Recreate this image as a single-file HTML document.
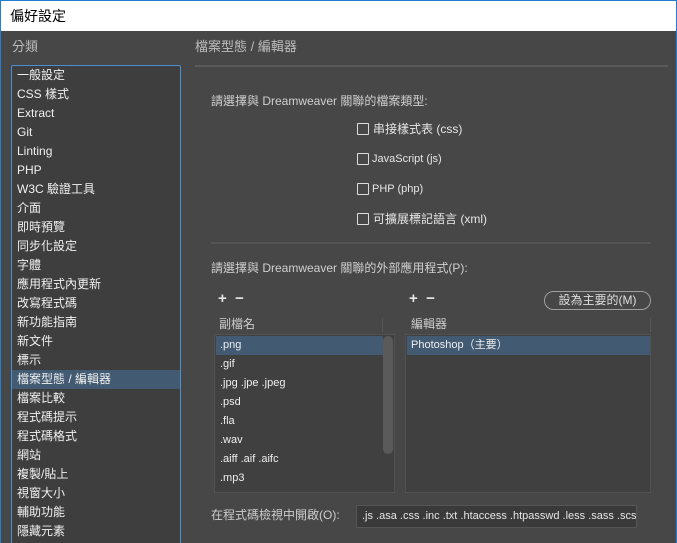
<!DOCTYPE html>
<html><head><meta charset="utf-8"><style>
*{margin:0;padding:0;box-sizing:border-box}
html,body{width:677px;height:543px;overflow:hidden}
body{background:#474747;font-family:"Liberation Sans","Noto Sans CJK TC",sans-serif;font-size:12px;color:#e6e6e6;position:relative}
.a{position:absolute;white-space:nowrap;line-height:16px}
#title{left:0;top:0;width:677px;height:31px;background:#fff;color:#000;font-size:14px;border-left:1px solid #1e7fd6;border-right:1px solid #1e7fd6;border-top:1px solid #1e7fd6}
#title span{position:absolute;left:9px;top:6px;line-height:18px}
#bl{left:0;top:31px;width:1px;height:512px;background:#1e7fd6}
#br{left:676px;top:31px;width:1px;height:512px;background:#1e7fd6}
.lbl{color:#bdbdbd;font-size:13px}
#list{left:11px;top:65px;width:170px;height:478px;background:#3e3e3e;border:1px solid #4a8fd0;border-bottom:none;border-radius:2px 2px 0 0;overflow:hidden}
#list div{height:19px;line-height:19px;padding-left:5px;font-size:12px;color:#f0f0f0}
#list .sel{background:#425a72}
.cb{width:12px;height:12px;border:1px solid #ddd;border-radius:1px}
.box{background:#404040;border:1px solid #525252}
.row{position:absolute;left:1px;height:19px;line-height:18px;padding-left:4px;font-size:11px;color:#eee}
</style></head><body>
<div id="title" class="a"><span>偏好設定</span></div>
<div id="bl" class="a"></div><div id="br" class="a"></div>
<div class="a lbl" style="left:12px;top:39px">分類</div>
<div class="a lbl" style="left:195px;top:39px">檔案型態 / 編輯器</div>
<div class="a" style="left:195px;top:65px;width:473px;height:2px;background:#5a5a5a"></div>
<div id="list" class="a">
<div>一般設定</div><div>CSS 樣式</div><div>Extract</div><div>Git</div><div>Linting</div><div>PHP</div><div>W3C 驗證工具</div><div>介面</div><div>即時預覽</div><div>同步化設定</div><div>字體</div><div>應用程式內更新</div><div>改寫程式碼</div><div>新功能指南</div><div>新文件</div><div>標示</div><div class="sel">檔案型態 / 編輯器</div><div>檔案比較</div><div>程式碼提示</div><div>程式碼格式</div><div>網站</div><div>複製/貼上</div><div>視窗大小</div><div>輔助功能</div><div>隱藏元素</div>
</div>
<div class="a" style="left:211px;top:93px;color:#cfcfcf">請選擇與 Dreamweaver 關聯的檔案類型:</div>
<div class="a cb" style="left:357px;top:123px"></div><div class="a" style="left:373px;top:121px">串接樣式表 (css)</div>
<div class="a cb" style="left:357px;top:153px"></div><div class="a" style="left:372px;top:151px;font-size:11px">JavaScript (js)</div>
<div class="a cb" style="left:357px;top:183px"></div><div class="a" style="left:372px;top:181px;font-size:11px">PHP (php)</div>
<div class="a cb" style="left:357px;top:213px"></div><div class="a" style="left:373px;top:211px">可擴展標記語言 (xml)</div>
<div class="a" style="left:211px;top:242px;width:440px;height:2px;background:#555"></div>
<div class="a" style="left:211px;top:260px;color:#cfcfcf">請選擇與 Dreamweaver 關聯的外部應用程式(P):</div>
<div class="a" style="left:218px;top:291px;font-size:15px;font-weight:bold">+&nbsp;&nbsp;−</div>
<div class="a" style="left:409px;top:291px;font-size:15px;font-weight:bold">+&nbsp;&nbsp;−</div>
<div class="a" style="left:544px;top:291px;width:107px;height:19px;border:1px solid #a0a0a0;border-radius:10px;text-align:center;line-height:17px;color:#ddd">設為主要的(M)</div>
<div class="a" style="left:219px;top:316px;color:#ccc">副檔名</div>
<div class="a" style="left:382px;top:318px;width:1px;height:14px;background:#555"></div>
<div class="a" style="left:411px;top:316px;color:#ccc">編輯器</div>
<div class="a" style="left:650px;top:318px;width:1px;height:14px;background:#555"></div>
<div class="a box" style="left:214px;top:334px;width:181px;height:159px">
<div class="row" style="top:1px;width:167px;background:#425a72">.png</div>
<div class="row" style="top:20px">.gif</div>
<div class="row" style="top:39px">.jpg .jpe .jpeg</div>
<div class="row" style="top:58px">.psd</div>
<div class="row" style="top:77px">.fla</div>
<div class="row" style="top:96px">.wav</div>
<div class="row" style="top:115px">.aiff .aif .aifc</div>
<div class="row" style="top:134px">.mp3</div>
<div class="a" style="left:168px;top:1px;width:10px;height:118px;background:#5a5a5a;border-radius:5px"></div>
</div>
<div class="a box" style="left:405px;top:334px;width:246px;height:159px">
<div class="row" style="top:1px;width:243px;background:#425a72">Photoshop（主要）</div>
</div>
<div class="a" style="left:211px;top:507px;color:#ccc">在程式碼檢視中開啟(O):</div>
<div class="a" style="left:356px;top:505px;width:281px;height:23px;background:#3a3a3a;border:1px solid #555;overflow:hidden;line-height:21px;padding-left:5px;font-size:11px">.js .asa .css .inc .txt .htaccess .htpasswd .less .sass .scss</div>
</body></html>
